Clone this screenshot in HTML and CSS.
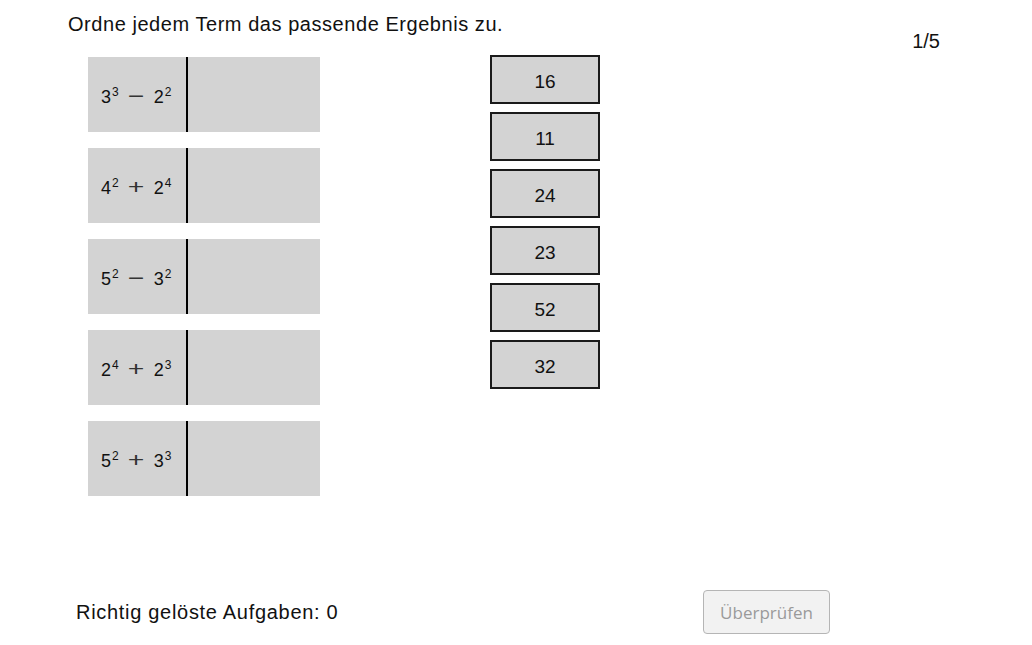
FILE: index.html
```html
<!DOCTYPE html>
<html lang="de">
<head>
    <meta charset="UTF-8">
    <meta name="viewport" content="width=device-width, initial-scale=1.0">
    <title>Terme zuordnen</title>
    <link rel="stylesheet" href="styles.css">
</head>
<body>
    <div class="page">
        <div class="header">
            <div class="task">Ordne jedem Term das passende Ergebnis zu.</div>
            <div class="counter">1/5</div>
        </div>

        <div class="board">
            <div class="terms">
                <div class="slot">
                    <div class="term">3<sup>3</sup><span class="op">&minus;</span>2<sup>2</sup></div>
                    <div class="drop"></div>
                </div>
                <div class="slot">
                    <div class="term">4<sup>2</sup><span class="op">+</span>2<sup>4</sup></div>
                    <div class="drop"></div>
                </div>
                <div class="slot">
                    <div class="term">5<sup>2</sup><span class="op">&minus;</span>3<sup>2</sup></div>
                    <div class="drop"></div>
                </div>
                <div class="slot">
                    <div class="term">2<sup>4</sup><span class="op">+</span>2<sup>3</sup></div>
                    <div class="drop"></div>
                </div>
                <div class="slot">
                    <div class="term">5<sup>2</sup><span class="op">+</span>3<sup>3</sup></div>
                    <div class="drop"></div>
                </div>
            </div>

            <div class="answers">
                <div class="card">16</div>
                <div class="card">11</div>
                <div class="card">24</div>
                <div class="card">23</div>
                <div class="card">52</div>
                <div class="card">32</div>
            </div>
        </div>

        <div class="footer">
            <div class="score">Richtig gelöste Aufgaben: 0</div>
            <button class="check" disabled>Überprüfen</button>
        </div>
    </div>
</body>
</html>
```

FILE: styles.css
```css
body {
    font-family: "Liberation Sans", Arial, sans-serif;
    margin: 0;
    padding: 0;
    color: #111;
}
.page {
    width: 1032px;
    height: 645px;
    display: flex;
    flex-direction: column;
}
.header {
    display: flex;
    align-items: flex-start;
    justify-content: space-between;
    width: 872px;
    padding: 12px 0 0 68px;
}
.task {
    font-size: 20px;
    letter-spacing: 0.55px;
    line-height: 24px;
}
.counter {
    font-size: 20px;
    line-height: 24px;
    margin-top: 17px;
}
.board {
    display: flex;
    align-items: flex-start;
    margin-top: 2px;
}
.terms {
    display: flex;
    flex-direction: column;
    gap: 16px;
    margin-left: 88px;
    padding-top: 2px;
}
.slot {
    display: flex;
    width: 232px;
    height: 75px;
    background-color: #d3d3d3;
}
.term {
    width: 100px;
    box-sizing: border-box;
    padding: 5px 0 0 13px;
    border-right: 2px solid #000;
    display: flex;
    align-items: center;
    font-size: 18px;
}
.term sup {
    font-size: 12px;
    align-self: flex-start;
    margin-top: 23px;
    margin-left: 1px;
}
.op {
    display: inline-block;
    width: 16px;
    margin: -2px 10px 0 9px;
    text-align: center;
    font-size: 21px;
    color: #333;
    transform: scaleX(1.35);
}
.drop {
    flex: 1;
}
.answers {
    display: flex;
    flex-direction: column;
    gap: 8px;
    margin-left: 170px;
}
.card {
    width: 110px;
    height: 49px;
    box-sizing: border-box;
    padding-top: 4px;
    border: 2px solid #1a1a1a;
    background-color: #d3d3d3;
    display: flex;
    align-items: center;
    justify-content: center;
    font-size: 19px;
}
.footer {
    display: flex;
    align-items: center;
    justify-content: space-between;
    margin-top: auto;
    margin-bottom: 11px;
    padding-left: 76px;
    width: 754px;
}
.score {
    font-size: 20px;
    letter-spacing: 0.7px;
}
.check {
    width: 127px;
    height: 44px;
    font-family: "Open Sans", sans-serif;
    font-size: 17px;
    color: #9a9a9a;
    background-color: #f2f2f2;
    border: 1px solid #b5b5b5;
    border-radius: 4px;
}
```
